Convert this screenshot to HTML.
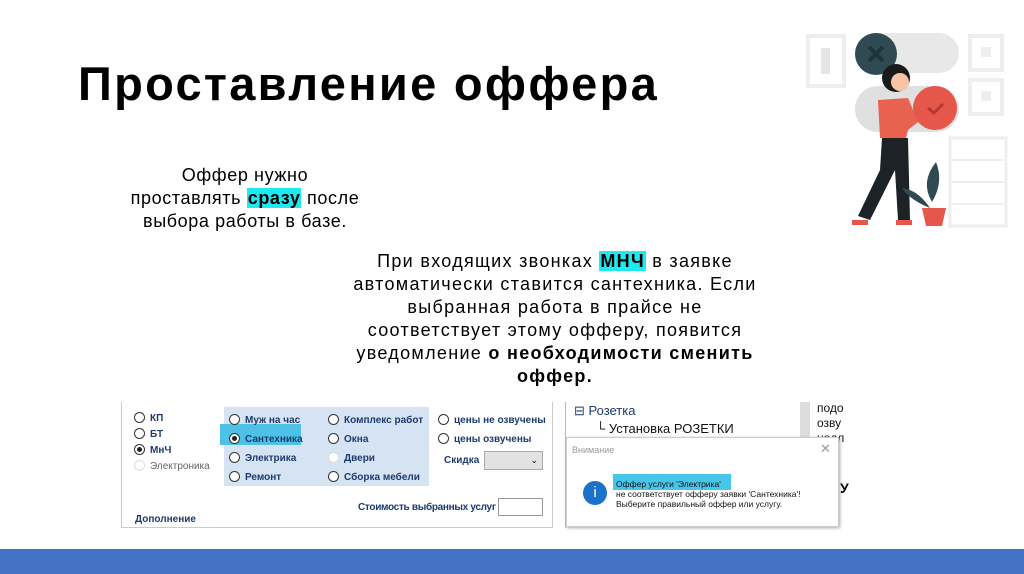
<!DOCTYPE html>
<html><head><meta charset="utf-8"><style>
*{margin:0;padding:0;box-sizing:border-box}
body{width:1024px;height:574px;background:#fff;position:relative;overflow:hidden;font-family:"Liberation Sans",sans-serif;color:#000}
.a{position:absolute;white-space:nowrap}
.t{left:78px;top:56px;font-size:47px;font-weight:bold;letter-spacing:2.3px}
.p{font-size:18px;text-align:center;line-height:23px}
.hl{background:#1de9f0;font-weight:bold;padding:0 1px}
.win{font-size:10px;font-weight:bold;color:#1d3b6e}
.r{display:inline-block;width:11px;height:11px;border:1px solid #333;border-radius:50%;vertical-align:-2px;margin-right:5px;background:#fff;position:relative}
.r.on::after{content:"";position:absolute;left:2px;top:2px;width:5px;height:5px;border-radius:50%;background:#222}
.r.dis{border-color:#ddd}
</style></head><body>
<div class="a t">Проставление оффера</div>
<div class="a p" style="left:95px;top:164px;width:300px;letter-spacing:0.6px">Оффер нужно<br>проставлять <span class="hl">сразу</span> после<br>выбора работы в базе.</div>
<div class="a p" style="left:305px;top:250px;width:500px;letter-spacing:1.3px">При входящих звонках <span class="hl">МНЧ</span> в заявке<br>автоматически ставится сантехника. Если<br>выбранная работа в прайсе не<br>соответствует этому офферу, появится<br>уведомление <b>о необходимости сменить<br>оффер.</b></div>

<svg class="a" style="left:800px;top:20px" width="224" height="220" viewBox="0 0 224 220">
<rect x="8" y="16" width="36" height="50" fill="none" stroke="#eee" stroke-width="4"/><rect x="21" y="28" width="9" height="26" fill="#e6e6e6"/>
<rect x="170" y="16" width="32" height="34" fill="none" stroke="#eee" stroke-width="4"/><rect x="181" y="27" width="10" height="10" fill="#eee"/>
<rect x="170" y="60" width="32" height="34" fill="none" stroke="#eee" stroke-width="4"/><rect x="181" y="71" width="10" height="10" fill="#eee"/>
<rect x="150" y="118" width="56" height="88" fill="none" stroke="#eee" stroke-width="3"/>
<path d="M152 140h52M152 162h52M152 184h52" stroke="#eee" stroke-width="2"/>
<rect x="55" y="13" width="104" height="40" rx="20" fill="#e8e8e8"/>
<circle cx="76" cy="34" r="21" fill="#2f4a52"/><path d="M69 27l14 14M83 27l-14 14" stroke="#1e3338" stroke-width="4"/>
<rect x="55" y="66" width="104" height="46" rx="23" fill="#e0e0e0"/>
<circle cx="135" cy="88" r="22" fill="#e5574a"/><path d="M128 88l6 5 9-9" stroke="#b23a30" stroke-width="3" fill="none"/>
<circle cx="96" cy="58" r="14" fill="#1a1a1a"/><circle cx="100" cy="62" r="9" fill="#f6c4a5"/>
<path d="M78 80 L108 78 L118 102 L108 110 L106 118 L80 118Z" fill="#e8624f"/>
<path d="M82 118 L108 118 L110 200 L98 200 L95 150 L70 200 L58 196 L80 150Z" fill="#1c2226"/>
<path d="M52 200h16v5h-16zM96 200h16v5h-16z" fill="#e5574a"/>
<path d="M132 182 q-12-20 4-40 q8 20-4 40z" fill="#2f4a52"/>
<path d="M130 188 q-20-8-28-20 q16 2 28 20z" fill="#2f4a52"/>
<path d="M122 188h24l-4 18h-16z" fill="#e5574a"/>
</svg>

<div class="a" style="left:121px;top:402px;width:432px;height:126px;border:1px solid #ccc;border-top:none;background:#fff"></div>
<div class="a" style="left:224px;top:407px;width:205px;height:79px;background:#d5e3f2"></div>
<div class="a" style="left:220px;top:424px;width:81px;height:21px;background:#4ec2e6"></div>
<div class="a win" style="left:134px;top:411px;line-height:16px"><span class="r"></span>КП<br><span class="r"></span>БТ<br><span class="r on"></span>МнЧ<br><span style="color:#666;font-weight:normal"><span class="r dis"></span>Электроника</span></div>
<div class="a win" style="left:229px;top:411px;line-height:19px"><span class="r"></span>Муж на час<br><span class="r on"></span>Сантехника<br><span class="r"></span>Электрика<br><span class="r"></span>Ремонт</div>
<div class="a win" style="left:328px;top:411px;line-height:19px"><span class="r"></span>Комплекс работ<br><span class="r"></span>Окна<br><span class="r dis"></span>Двери<br><span class="r"></span>Сборка мебели</div>
<div class="a win" style="left:438px;top:411px;line-height:19px"><span class="r"></span>цены не озвучены<br><span class="r"></span>цены озвучены</div>
<div class="a win" style="left:444px;top:455px">Скидка</div>
<div class="a" style="left:484px;top:451px;width:59px;height:19px;background:#e2e2e2;border:1px solid #aaa;font-size:9px;text-align:right;padding-right:4px;line-height:17px">⌄</div>
<div class="a win" style="left:358px;top:502px;letter-spacing:-0.3px">Стоимость выбранных услуг</div>
<div class="a" style="left:498px;top:498px;width:45px;height:18px;border:1px solid #999;background:#fff"></div>
<div class="a win" style="left:135px;top:514px">Дополнение</div>

<div class="a" style="left:565px;top:402px;width:283px;height:126px;background:#fff;border-left:1px solid #bbb"></div>
<div class="a" style="left:800px;top:402px;width:10px;height:35px;background:#ddd"></div>
<div class="a" style="left:574px;top:403px;font-size:13px;color:#1d3b6e">⊟ Розетка</div>
<div class="a" style="left:596px;top:421px;font-size:13px;color:#111">└ Установка РОЗЕТКИ</div>
<div class="a" style="left:817px;top:401px;font-size:12px;line-height:15px;color:#111">подо<br>озву<br>надл<br>о</div>
<div class="a" style="left:566px;top:437px;width:273px;height:90px;background:#fff;border:1px solid #ccc;box-shadow:1px 1px 3px #aaa"></div>
<div class="a" style="left:572px;top:445px;font-size:9px;color:#999">Внимание</div>
<div class="a" style="left:820px;top:441px;font-size:13px;color:#999">✕</div>
<div class="a" style="left:583px;top:481px;width:24px;height:24px;border-radius:50%;background:#1a73c8;color:#fff;font-size:15px;text-align:center;line-height:24px">i</div>
<div class="a" style="left:613px;top:474px;width:118px;height:16px;background:#47c6ea"></div>
<div class="a" style="left:616px;top:479px;font-size:8.5px;line-height:10px;color:#111">Оффер услуги 'Электрика'<br>не соответствует офферу заявки 'Сантехника'!<br>Выберите правильный оффер или услугу.</div>
<div class="a" style="left:840px;top:480px;font-size:14px;font-weight:bold">У</div>

<div class="a" style="left:0;top:549px;width:1024px;height:25px;background:#4472c4"></div>
</body></html>
